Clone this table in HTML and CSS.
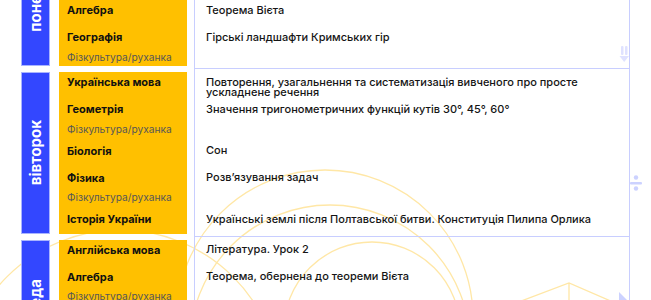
FILE: index.html
```html
<!DOCTYPE html>
<html lang="uk">
<head>
<meta charset="utf-8">
<title>Розклад</title>
<link rel="stylesheet" href="styles.css">
</head>
<body>
<svg class="decor" width="651" height="300" viewBox="0 0 651 300" aria-hidden="true">
  <g fill="none" stroke="#ffe7a6" stroke-width="1.3">
    <circle cx="325" cy="318" r="148"/>
    <circle cx="372" cy="330" r="88"/>
    <circle cx="330" cy="345" r="140"/>
    <circle cx="120" cy="390" r="160"/>
    <path d="M500 309 L569 283 L650 318 M569 283 L569 300"/>
  </g>
  <g fill="#dfe2ff">
    <rect x="621" y="46" width="2.5" height="9" rx="1"/>
    <rect x="625" y="46" width="2.5" height="9" rx="1"/>
    <path d="M619.5 56 L629 56 L624.2 62 Z"/>
  </g>
  <g fill="#ccd2ff">
    <rect x="630" y="182" width="12" height="2.5" rx="1"/>
    <circle cx="636" cy="177.5" r="2.2"/>
    <circle cx="636" cy="188.5" r="2.2"/>
    <path d="M619 300 L619 292 L627 300 Z"/>
  </g>
</svg>

<div class="schedule">
  <section class="day">
    <div class="day-label"><span>понеділок</span></div>
    <div class="subjects">
      <div class="l"><b>Українська мова</b></div>
      <div class="l"><b>Англійська мова</b></div>
      <div class="l"><b>Хімія</b></div>
      <div class="l"><b>Алгебра</b></div>
      <div class="l pe"><b>Географія</b><span class="pe-name">Фізкультура/руханка</span></div>
    </div>
    <div class="topics">
      <div class="t">Складні речення</div>
      <div class="t">Граматика</div>
      <div class="t">Розв’язування задач</div>
      <div class="t">Теорема Вієта</div>
      <div class="t pe">Гірські ландшафти Кримських гір</div>
    </div>
  </section>

  <section class="day">
    <div class="day-label"><span>вівторок</span></div>
    <div class="subjects">
      <div class="l"><b>Українська мова</b></div>
      <div class="l pe"><b>Геометрія</b><span class="pe-name">Фізкультура/руханка</span></div>
      <div class="l"><b>Біологія</b></div>
      <div class="l pe"><b>Фізика</b><span class="pe-name">Фізкультура/руханка</span></div>
      <div class="l"><b>Історія України</b></div>
    </div>
    <div class="topics">
      <div class="t">Повторення, узагальнення та систематизація вивченого про просте ускладнене речення</div>
      <div class="t pe">Значення тригонометричних функцій кутів 30°, 45°, 60°</div>
      <div class="t">Сон</div>
      <div class="t pe">Розв’язування задач</div>
      <div class="t">Українські землі після Полтавської битви. Конституція Пилипа Орлика</div>
    </div>
  </section>

  <section class="day">
    <div class="day-label"><span>середа</span></div>
    <div class="subjects">
      <div class="l"><b>Англійська мова</b></div>
      <div class="l pe"><b>Алгебра</b><span class="pe-name">Фізкультура/руханка</span></div>
      <div class="l"><b>Хімія</b></div>
      <div class="l pe"><b>Зарубіжна література</b><span class="pe-name">Фізкультура/руханка</span></div>
    </div>
    <div class="topics">
      <div class="t">Література. Урок 2</div>
      <div class="t pe">Теорема, обернена до теореми Вієта</div>
      <div class="t">Хімічні реакції</div>
      <div class="t pe">Поезія</div>
    </div>
  </section>
</div>
</body>
</html>
```
FILE: styles.css
```css
* { box-sizing: border-box; }

html, body {
  margin: 0;
  padding: 0;
  background: #ffffff;
}

body {
  position: relative;
  width: 651px;
  height: 300px;
  overflow: hidden;
  font-family: Inter, "Noto Sans", sans-serif;
  color: #111111;
}

.decor {
  position: absolute;
  top: 0;
  left: 0;
}

.schedule {
  position: relative;
  margin-top: -84px;
  padding: 0 21px;
}

.day {
  display: flex;
  align-items: stretch;
}

.day-label {
  width: 29px;
  margin: 3px 9px 3px 0;
  background: #3347ff;
  border: 1px solid #a9b4ff;
  display: flex;
  align-items: center;
  justify-content: center;
}

.day-label span {
  writing-mode: vertical-rl;
  transform: rotate(180deg);
  color: #ffffff;
  font-weight: 700;
  font-size: 15px;
  white-space: nowrap;
}

.subjects {
  width: 128px;
  margin: 3px 7px 3px 0;
  padding: 0 4px 2.5px 8px;
  background: #ffc000;
  display: flex;
  flex-direction: column;
  gap: 6px;
}

.l {
  height: 21px;
}

.l.pe {
  height: 35.5px;
}

.l b {
  display: block;
  font-size: 11px;
  font-weight: 700;
  line-height: 21px;
  white-space: nowrap;
}

.pe-name {
  display: block;
  margin-top: 3.5px;
  font-size: 10.2px;
  font-weight: 400;
  line-height: 11px;
  color: #575757;
  white-space: nowrap;
}

.topics {
  width: 436px;
  border-left: 1px solid #c8ceff;
  border-right: 1px solid #c8ceff;
  border-bottom: 1px solid #c8ceff;
  padding: 3px 11px 5.5px 11px;
  display: flex;
  flex-direction: column;
  gap: 6px;
}

.t {
  height: 21px;
  padding-top: 4.5px;
  font-size: 11px;
  font-weight: 500;
  line-height: 10.5px;
  color: #151515;
}

.t.pe {
  height: 35.5px;
}
```
